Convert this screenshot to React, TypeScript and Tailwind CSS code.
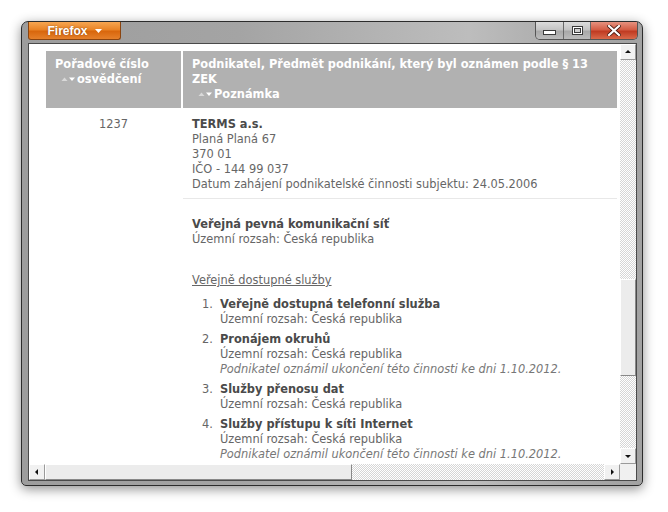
import React from 'react';

const services = [
  { name: 'Veřejně dostupná telefonní služba', ended: false },
  { name: 'Pronájem okruhů', ended: true },
  { name: 'Služby přenosu dat', ended: false },
  { name: 'Služby přístupu k síti Internet', ended: true },
];

const SortArrows = () => (
  <svg width="15" height="7" viewBox="0 0 15 7" className="inline-block mr-[1px] align-[1px]">
    <path d="M0.5 6 L3.5 2.5 L6.5 6Z" fill="#d9d9d9" />
    <path d="M8 2.5 L14 2.5 L11 6Z" fill="#ffffff" />
  </svg>
);

const arrowPaths = {
  up: 'M1 5 L4 2 L7 5Z',
  down: 'M1 3 L7 3 L4 6Z',
  left: 'M5 1 L5 7 L2 4Z',
  right: 'M3 1 L3 7 L6 4Z',
};

const ScrollButton = ({ dir }: { dir: keyof typeof arrowPaths }) => (
  <div className="w-[16px] h-[16px] shrink-0 flex items-center justify-center bg-[#f1f1f1] border border-t-white border-l-white border-r-[#9a9a9a] border-b-[#9a9a9a]">
    <svg width="8" height="8" viewBox="0 0 8 8">
      <path d={arrowPaths[dir]} fill="#111" />
    </svg>
  </div>
);

const track =
  'bg-[repeating-conic-gradient(#d6d6d6_0%_25%,#ffffff_0%_50%)] bg-[length:2px_2px]';

const App = () => {
  return (
    <div className="w-[668px] h-[512px] bg-white overflow-hidden pt-[21px] pl-[21px] font-[DejaVu_Sans,Verdana,sans-serif]">
      {/* Window */}
      <div className="w-[622px] h-[465px] flex flex-col rounded-t-[7px] rounded-b-[5px] border border-[#2c2c2c] bg-[linear-gradient(90deg,#9d9d9d_0%,#a4a4a4_35%,#bdbdbd_72%,#aaaaaa_88%,#a2a2a2_100%)] shadow-[0_3px_12px_rgba(0,0,0,0.45)]">
        {/* Title bar */}
        <div className="h-[20px] flex justify-between pl-[6px] pr-[4px] shrink-0">
          <div className="w-[93px] h-[18px] flex items-center justify-center gap-[7px] rounded-b-[3px] border border-t-0 border-[#8a4410] bg-[linear-gradient(180deg,#f6a651_0%,#e98326_45%,#d9670d_55%,#e5802a_100%)] font-['Liberation_Sans',Arial,sans-serif] font-bold text-[12px] text-white [text-shadow:0_0_2px_rgba(90,40,0,0.6)]">
            <span>Firefox</span>
            <svg width="7" height="4" viewBox="0 0 7 4">
              <path d="M0 0 L7 0 L3.5 4Z" fill="#fff" />
            </svg>
          </div>
          <div className="flex h-[18px] rounded-b-[5px] border border-t-0 border-[#555] overflow-hidden">
            <div className="w-[28px] flex items-end justify-center pb-[4px] bg-[linear-gradient(180deg,#dcdcdc_0%,#c4c4c4_45%,#a9a9a9_55%,#bcbcbc_100%)] border-r border-[#6a6a6a]">
              <div className="w-[13px] h-[5px] bg-white border border-[#3a3a3a]" />
            </div>
            <div className="w-[27px] flex items-center justify-center bg-[linear-gradient(180deg,#dcdcdc_0%,#c4c4c4_45%,#a9a9a9_55%,#bcbcbc_100%)] border-r border-[#6a6a6a]">
              <div className="w-[11px] h-[9px] border border-[#3a3a3a] bg-white p-[1px]">
                <div className="w-full h-full border border-[#3a3a3a] bg-[#cfcfcf]" />
              </div>
            </div>
            <div className="w-[46px] flex items-center justify-center bg-[linear-gradient(180deg,#e6927f_0%,#d45d45_45%,#c03b22_55%,#d9694a_100%)]">
              <svg width="14" height="11" viewBox="0 0 14 11">
                <path d="M2 1 L12 10 M12 1 L2 10" stroke="#4a1a10" strokeWidth="3.8" strokeLinecap="square" />
                <path d="M2 1 L12 10 M12 1 L2 10" stroke="#ffffff" strokeWidth="2.2" strokeLinecap="square" />
              </svg>
            </div>
          </div>
        </div>

        {/* Content panel */}
        <div className="ml-[6px] mr-[5px] mt-[1px] h-[438px] flex flex-col border border-[#4a4a4a] bg-white">
          <div className="flex h-[420px]">
            {/* Viewport */}
            <div className="w-[591px] h-[420px] overflow-hidden pl-[17px] pt-[7px] text-[11.4px] leading-[15px] text-[#666]">
              {/* Header */}
              <div className="grid grid-cols-[135px_434px] gap-x-[2px] h-[57px] font-bold text-white">
                <div className="bg-[#b1b1b1] pl-[9px] pt-[6px] whitespace-nowrap">
                  Pořadové číslo
                  <br />
                  <span className="pl-[6px]">
                    <SortArrows />
                    osvědčení
                  </span>
                </div>
                <div className="bg-[#b1b1b1] pl-[9px] pt-[6px] whitespace-nowrap">
                  Podnikatel, Předmět podnikání, který byl oznámen podle § 13
                  <br />
                  ZEK
                  <br />
                  <span className="pl-[6px]">
                    <SortArrows />
                    Poznámka
                  </span>
                </div>
              </div>

              {/* Row 1 */}
              <div className="grid grid-cols-[135px_434px] gap-x-[2px]">
                <div className="text-center pt-[9px]">1237</div>
                <div className="pl-[9px] pt-[9px] pb-[6px] border-b border-[#e8e8e8] whitespace-nowrap">
                  <div className="font-bold text-[#4a4a4a]">TERMS a.s.</div>
                  <div>Planá Planá 67</div>
                  <div>370 01</div>
                  <div>IČO - 144 99 037</div>
                  <div>Datum zahájení podnikatelské činnosti subjektu: 24.05.2006</div>
                </div>
              </div>

              {/* Row 2 */}
              <div className="grid grid-cols-[135px_434px] gap-x-[2px]">
                <div />
                <div className="pl-[9px] pt-[18px] whitespace-nowrap">
                  <div className="font-bold text-[#4a4a4a]">Veřejná pevná komunikační síť</div>
                  <div>Územní rozsah: Česká republika</div>
                  <div className="mt-[26px] underline">Veřejně dostupné služby</div>
                  <ol className="mt-[9px] flex flex-col gap-[5px]">
                    {services.map((s, i) => (
                      <li key={s.name} className="flex">
                        <span className="w-[28px] shrink-0 pl-[10px]">{i + 1}.</span>
                        <div>
                          <div className="font-bold text-[#4a4a4a]">{s.name}</div>
                          <div>Územní rozsah: Česká republika</div>
                          {s.ended && (
                            <div className="italic text-[#777]">
                              Podnikatel oznámil ukončení této činnosti ke dni 1.10.2012.
                            </div>
                          )}
                        </div>
                      </li>
                    ))}
                  </ol>
                </div>
              </div>
            </div>

            {/* Vertical scrollbar */}
            <div className="w-[16px] h-[420px] flex flex-col">
              <ScrollButton dir="up" />
              <div className={`h-[219px] ${track}`} />
              <div className="h-[97px] bg-[#ececec] border border-t-white border-l-white border-r-[#888] border-b-[#888]" />
              <div className={`flex-1 ${track}`} />
              <ScrollButton dir="down" />
            </div>
          </div>

          {/* Horizontal scrollbar */}
          <div className="flex h-[16px]">
            <ScrollButton dir="left" />
            <div className="w-[307px] bg-[#ececec] border border-t-white border-l-white border-r-[#888] border-b-[#888]" />
            <div className={`w-[252px] ${track}`} />
            <ScrollButton dir="right" />
            <div className="flex-1 bg-[#f0f0f0]" />
          </div>
        </div>
      </div>
    </div>
  );
};

export default App;
